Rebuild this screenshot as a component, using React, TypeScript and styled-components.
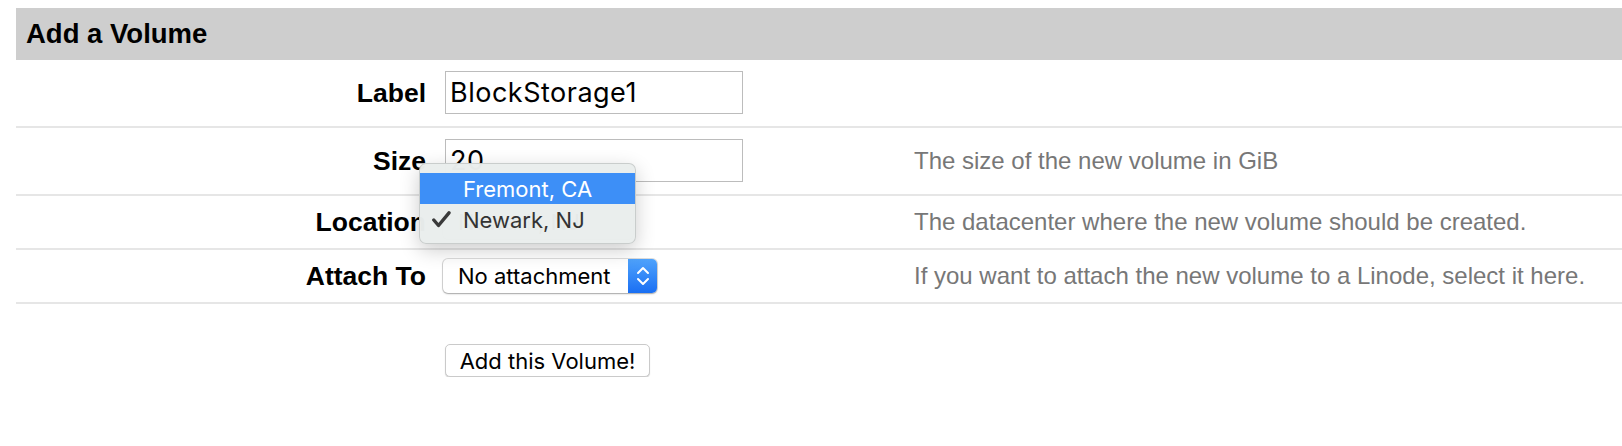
import styled, { createGlobalStyle } from 'styled-components';

const sans = `"Liberation Sans", Arial, sans-serif`;
const system = `Inter, "Noto Sans", sans-serif`;

const GlobalStyle = createGlobalStyle`
  html, body {
    margin: 0;
    background: #fff;
    overflow: hidden;
  }
  body {
    padding: 8px 0 0 16px;
  }
  * {
    box-sizing: border-box;
  }
`;

const Panel = styled.section`
  width: calc(100vw - 16px);
  font-family: ${sans};
  color: #000;
`;

const Header = styled.h2`
  margin: 0;
  height: 52px;
  display: flex;
  align-items: center;
  padding-left: 10px;
  background: #cecece;
  font-size: 27.5px;
  font-weight: 700;
`;

const Row = styled.div`
  display: grid;
  grid-template-columns: 429px 453px 1fr;
  align-items: center;
  padding: 9px 0;
  border-bottom: 2px solid #e6e6e6;
`;

const ButtonRow = styled.div`
  display: grid;
  grid-template-columns: 429px 1fr;
  padding-top: 40px;
`;

const Label = styled.label`
  text-align: right;
  padding-right: 19px;
  font-size: 26.5px;
  font-weight: 700;
  white-space: nowrap;
`;

const Field = styled.div`
  position: relative;
  display: flex;
  align-items: center;
`;

const Hint = styled.div`
  font-size: 24px;
  color: #777;
  padding-left: 16px;
  white-space: nowrap;
`;

const TextInput = styled.input`
  width: 298px;
  height: 43px;
  margin: 2px 0 3px;
  padding: 0 4px;
  border: 1px solid #bcbcbc;
  border-radius: 0;
  font-family: ${system};
  font-size: 27px;
  letter-spacing: 0.5px;
  color: #000;
  outline: none;
`;

const Select = styled.div<{ $width: number }>`
  position: relative;
  width: ${({ $width }) => $width}px;
  height: 34px;
  margin-left: -2px;
  display: flex;
  align-items: center;
  padding-left: 15px;
  background: #fff;
  border-radius: 5px;
  box-shadow: 0 0 0 1px rgba(0, 0, 0, 0.13), 0 1px 2px rgba(0, 0, 0, 0.25);
  font-family: ${system};
  font-size: 22px;
  color: #000;
`;

const Stepper = styled.span`
  position: absolute;
  top: 0;
  right: 0;
  bottom: 0;
  width: 29px;
  display: flex;
  align-items: center;
  justify-content: center;
  border-radius: 0 5px 5px 0;
  background: linear-gradient(#4fa3fc, #1a6ff3);
`;

const Menu = styled.ul`
  position: absolute;
  left: -26px;
  top: -42px;
  width: 217px;
  height: 81px;
  margin: 0;
  padding: 9px 0 0;
  list-style: none;
  background: rgba(234, 238, 237, 0.98);
  border: 1px solid rgba(0, 0, 0, 0.14);
  border-radius: 7px;
  box-shadow: 0 6px 20px rgba(0, 0, 0, 0.2);
  font-family: ${system};
  font-size: 22px;
  z-index: 2;
`;

const MenuItem = styled.li<{ $active?: boolean }>`
  position: relative;
  height: 31px;
  display: flex;
  align-items: center;
  padding-left: 43px;
  background: ${({ $active }) => ($active ? '#3d8ff7' : 'transparent')};
  color: ${({ $active }) => ($active ? '#fff' : '#333')};
`;

const Check = styled.svg`
  position: absolute;
  left: 12px;
  top: 7px;
`;

const Button = styled.button`
  width: 205px;
  height: 33px;
  background: #fff;
  border: 1px solid #cacaca;
  border-radius: 5px;
  box-shadow: 0 1px 1px rgba(0, 0, 0, 0.18);
  font-family: ${system};
  font-size: 22px;
  color: #000;
  padding: 0;
`;

export default function App() {
  return (
    <>
      <GlobalStyle />
      <Panel>
        <Header>Add a Volume</Header>

        <Row>
          <Label>Label</Label>
          <Field>
            <TextInput defaultValue="BlockStorage1" />
          </Field>
          <Hint />
        </Row>

        <Row>
          <Label>Size</Label>
          <Field>
            <TextInput defaultValue="20" />
          </Field>
          <Hint>The size of the new volume in GiB</Hint>
        </Row>

        <Row>
          <Label>Location</Label>
          <Field>
            <Select $width={190}>Newark, NJ</Select>
            <Menu>
              <MenuItem $active>Fremont, CA</MenuItem>
              <MenuItem>
                <Check width="19" height="17" viewBox="0 0 19 17">
                  <path d="M1.8 9 L6.5 14.5 L17 1.8" fill="none" stroke="#3a3a3a" strokeWidth="3.4" strokeLinecap="round" strokeLinejoin="round" />
                </Check>
                Newark, NJ
              </MenuItem>
            </Menu>
          </Field>
          <Hint>The datacenter where the new volume should be created.</Hint>
        </Row>

        <Row>
          <Label>Attach To</Label>
          <Field>
            <Select $width={214}>
              No attachment
              <Stepper>
                <svg width="14" height="22" viewBox="0 0 14 22">
                  <path d="M2 8 L7 3 L12 8 M2 14 L7 19 L12 14" fill="none" stroke="#fff" strokeWidth="2" strokeLinecap="round" strokeLinejoin="round" />
                </svg>
              </Stepper>
            </Select>
          </Field>
          <Hint>If you want to attach the new volume to a Linode, select it here.</Hint>
        </Row>

        <ButtonRow>
          <span />
          <div>
            <Button>Add this Volume!</Button>
          </div>
        </ButtonRow>
      </Panel>
    </>
  );
}
